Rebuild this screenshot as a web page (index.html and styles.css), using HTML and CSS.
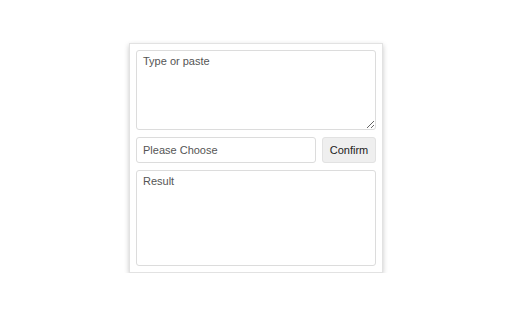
FILE: index.html
```html
<!DOCTYPE html>
<html lang="en">
  <head>
    <meta charset="UTF-8" />
    <meta name="viewport" content="width=device-width, initial-scale=1.0" />
    <title>Convert</title>
    <link rel="stylesheet" href="styles.css">
  </head>
  <body>
    <section class="card">
      <textarea class="source" placeholder="Type or paste"></textarea>
      <div class="row">
        <input class="choose" type="text" placeholder="Please Choose" />
        <button class="confirm">Confirm</button>
      </div>
      <div class="result">Result</div>
    </section>
  </body>
</html>
```

FILE: styles.css
```css
body {
  margin: 0;
  padding: 43px 0 0;
  background-color: white;
  display: flex;
  justify-content: center;
  font-family: "Liberation Sans", Arial, sans-serif;
  font-size: 11px;
}
.card {
  width: 240px;
  padding: 6px;
  border: 1px solid #e2e2e2;
  box-shadow: 0 2px 5px rgba(0, 0, 0, 0.22);
  display: flex;
  flex-direction: column;
  gap: 7px;
  background-color: white;
}
.source {
  box-sizing: border-box;
  width: 100%;
  height: 80px;
  margin: 0;
  padding: 4px 6px;
  border: 1px solid #dcdcdc;
  border-radius: 3px;
  font-family: inherit;
  font-size: 11px;
  color: #333;
  resize: vertical;
  outline: none;
}
.source::placeholder,
.choose::placeholder {
  color: #555;
}
.row {
  display: flex;
  gap: 6px;
  height: 26px;
}
.choose {
  box-sizing: border-box;
  flex: 1;
  margin: 0;
  padding: 0 6px;
  border: 1px solid #dcdcdc;
  border-radius: 3px;
  font-family: inherit;
  font-size: 11px;
  outline: none;
}
.confirm {
  width: 54px;
  margin: 0;
  padding: 0;
  border: 1px solid #e2e2e2;
  border-radius: 3px;
  background-color: #efefef;
  font-family: inherit;
  font-size: 11px;
  color: #222;
}
.result {
  box-sizing: border-box;
  height: 96px;
  padding: 4px 6px;
  border: 1px solid #dcdcdc;
  border-radius: 3px;
  color: #555;
}
```
